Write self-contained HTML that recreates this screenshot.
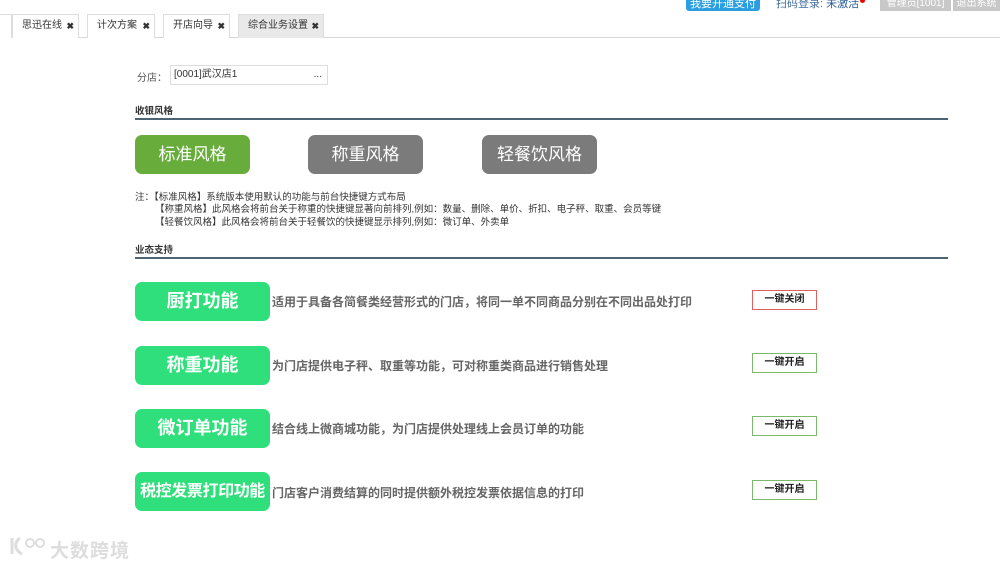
<!DOCTYPE html>
<html><head><meta charset="utf-8"><style>
*{margin:0;padding:0;box-sizing:border-box}
body{width:1000px;height:566px;background:#fff;font-family:"Liberation Sans","Noto Sans CJK SC",sans-serif;position:relative;overflow:hidden;color:#333}
.a{position:absolute}
.tab{position:absolute;top:14px;height:24px;border:1px solid #ddd;border-bottom:none;font-size:10px;line-height:22px;padding-left:9px;color:#333;background:#fff;white-space:nowrap}
.tab b{position:absolute;right:4px;top:0;font-size:9px}
.sbtn{position:absolute;top:135px;width:115px;height:39px;border-radius:7px;color:#fff;font-size:17px;line-height:39px;text-align:center}
.fbtn{position:absolute;left:135px;width:135px;height:39px;border-radius:7px;background:#2fdf7b;color:#fff;font-size:18px;font-weight:bold;line-height:39px;text-align:center;white-space:nowrap}
.desc{position:absolute;left:272px;font-size:12px;font-weight:bold;color:#666}
.tg{position:absolute;left:752px;width:65px;height:20px;border:1px solid #7cb86a;font-size:10px;font-weight:bold;line-height:18px;text-align:center;color:#222}
.note{position:absolute;font-size:9.5px;color:#333;line-height:12px;white-space:nowrap}
.h{position:absolute;left:135px;width:813px;font-size:9.5px;font-weight:bold;border-bottom:2px solid #4d6474;line-height:12px;padding-top:2px}
</style></head><body>
<div class="a" style="left:0;top:37px;width:1000px;height:1px;background:#d6d6d6"></div>
<div class="tab" style="left:-2px;width:14px"></div>
<div class="tab" style="left:12px;width:67px">思迅在线<b>✖</b></div>
<div class="tab" style="left:87px;width:68px">计次方案<b>✖</b></div>
<div class="tab" style="left:163px;width:67px">开店向导<b>✖</b></div>
<div class="tab" style="left:238px;width:86px;background:#e9e9e9">综合业务设置<b>✖</b></div>

<div class="a" style="left:686px;top:-3px;width:74px;height:14px;background:#2a9ee0;border-radius:3px;color:#fff;font-size:11px;line-height:14px;text-align:center">我要开通支付</div>
<div class="a" style="left:776px;top:-3px;font-size:11px;color:#4470a0;line-height:14px">扫码登录: <span style="color:#2a5c9a">未激活</span></div>
<div class="a" style="left:860px;top:-2px;width:5px;height:5px;border-radius:50%;background:#e00"></div>
<div class="a" style="left:880px;top:-3px;width:71px;height:14px;background:#c8c8c8;color:#fff;font-size:10px;line-height:14px;text-align:center">管理员[1001]</div>
<div class="a" style="left:953px;top:-3px;width:47px;height:14px;background:#c8c8c8;color:#fff;font-size:10px;line-height:14px;text-align:center">退出系统</div>

<div class="a" style="left:137px;top:69px;font-size:10px;color:#555">分店：</div>
<div class="a" style="left:170px;top:65px;width:158px;height:20px;border:1px solid #ddd;font-size:10px;line-height:18px;padding-left:3px;color:#333">[0001]武汉店1<span style="position:absolute;right:5px">...</span></div>

<div class="h" style="top:104px;height:16px">收银风格</div>
<div class="sbtn" style="left:135px;background:#68ad3c">标准风格</div>
<div class="sbtn" style="left:308px;background:#7b7b7b">称重风格</div>
<div class="sbtn" style="left:482px;background:#7b7b7b">轻餐饮风格</div>

<div class="note" style="left:135px;top:192px">注：【标准风格】系统版本使用默认的功能与前台快捷键方式布局</div>
<div class="note" style="left:155px;top:204px">【称重风格】此风格会将前台关于称重的快捷键显著向前排列,例如：数量、删除、单价、折扣、电子秤、取重、会员等键</div>
<div class="note" style="left:155px;top:217px">【轻餐饮风格】此风格会将前台关于轻餐饮的快捷键显示排列,例如：微订单、外卖单</div>

<div class="h" style="top:243px;height:16px">业态支持</div>

<div class="fbtn" style="top:282px">厨打功能</div>
<div class="desc" style="top:293px">适用于具备各简餐类经营形式的门店，将同一单不同商品分别在不同出品处打印</div>
<div class="tg" style="top:290px;border-color:#e06060">一键关闭</div>

<div class="fbtn" style="top:346px">称重功能</div>
<div class="desc" style="top:357px">为门店提供电子秤、取重等功能，可对称重类商品进行销售处理</div>
<div class="tg" style="top:353px">一键开启</div>

<div class="fbtn" style="top:409px">微订单功能</div>
<div class="desc" style="top:420px">结合线上微商城功能，为门店提供处理线上会员订单的功能</div>
<div class="tg" style="top:416px">一键开启</div>

<div class="fbtn" style="top:472px;font-size:16px;letter-spacing:-0.4px">税控发票打印功能</div>
<div class="desc" style="top:484px">门店客户消费结算的同时提供额外税控发票依据信息的打印</div>
<div class="tg" style="top:480px">一键开启</div>

<svg class="a" style="left:8px;top:535px" width="40" height="24" viewBox="0 0 40 24"><path d="M4 3v16M12 3c-6 4-6 12 2 16" stroke="#ddd" stroke-width="3" fill="none"/><circle cx="22" cy="8" r="4" stroke="#ddd" stroke-width="2" fill="none"/><circle cx="32" cy="8" r="4" stroke="#ddd" stroke-width="2" fill="none"/></svg>
<div class="a" style="left:50px;top:536px;font-size:19px;color:#ddd;font-weight:bold;letter-spacing:1px">大数跨境</div>
</body></html>
